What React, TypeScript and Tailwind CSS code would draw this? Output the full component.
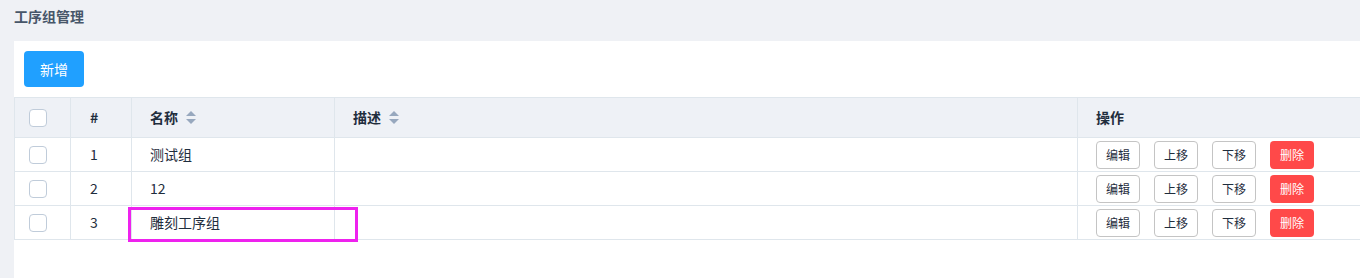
import React from 'react'

type Row = { id: number; name: string; desc: string }

const rows: Row[] = [
  { id: 1, name: '测试组', desc: '' },
  { id: 2, name: '12', desc: '' },
  { id: 3, name: '雕刻工序组', desc: '' },
]

const font = { fontFamily: '"Noto Sans CJK SC", "Noto Sans", sans-serif' }

function SortCaret() {
  return (
    <svg width="10" height="13" viewBox="0 0 10 13" className="ml-[8px]">
      <path d="M5 0 L10 5 L0 5 Z" fill="#97a8be" />
      <path d="M0 8 L10 8 L5 13 Z" fill="#97a8be" />
    </svg>
  )
}

function Checkbox() {
  return <span className="block w-[18px] h-[18px] rounded-[4px] border border-[#c0ccda] bg-white" />
}

const cols = 'grid grid-cols-[56px_61px_203px_743px_1fr]'
const cell = 'border-r border-[#dfe6ec] flex items-center'

export default function App() {
  return (
    <div className="min-h-[278px] bg-[#eff1f5] text-[14px] text-[#1f2d3d]" style={font}>
      <div className="h-[41px] pl-[14px] flex items-center">
        <h2 className="text-[14px] font-bold text-[#475669] -mt-[8px]">工序组管理</h2>
      </div>

      <div className="ml-[14px] bg-white h-[237px]">
        <div className="p-[10px]">
          <button className="w-[60px] h-[36px] rounded-[4px] bg-[#20a0ff] text-white text-[14px]">新增</button>
        </div>

        <div className="border-l border-t border-[#dfe6ec]">
          {/* 表头 */}
          <div className={`${cols} h-[40px] bg-[#eef1f6] border-b border-[#dfe6ec] font-bold`}>
            <div className={`${cell} pl-[14px]`}><Checkbox /></div>
            <div className={`${cell} pl-[19px]`}>#</div>
            <div className={`${cell} pl-[18px]`}>名称<SortCaret /></div>
            <div className={`${cell} pl-[18px]`}>描述<SortCaret /></div>
            <div className="flex items-center pl-[18px]">操作</div>
          </div>

          {/* 数据行 */}
          {rows.map((r) => (
            <div key={r.id} className={`${cols} h-[34px] border-b border-[#dfe6ec] relative`}>
              <div className={`${cell} pl-[14px]`}><Checkbox /></div>
              <div className={`${cell} pl-[19px]`}>{r.id}</div>
              <div className={`${cell} pl-[18px]`}>{r.name}</div>
              <div className={`${cell} pl-[18px]`}>{r.desc}</div>
              <div className="flex items-center pl-[18px] gap-[14px] text-[12px]">
                <button className="w-[44px] h-[28px] rounded-[4px] border border-[#c4c4c4] bg-white">编辑</button>
                <button className="w-[44px] h-[28px] rounded-[4px] border border-[#c4c4c4] bg-white">上移</button>
                <button className="w-[44px] h-[28px] rounded-[4px] border border-[#c4c4c4] bg-white">下移</button>
                <button className="w-[44px] h-[28px] rounded-[4px] bg-[#ff4949] text-white">删除</button>
              </div>
              {r.id === 3 && (
                <span className="absolute left-[113px] top-[1px] w-[230px] h-[35px] border-[3px] border-[#ee22ee] pointer-events-none" />
              )}
            </div>
          ))}
        </div>
      </div>
    </div>
  )
}
